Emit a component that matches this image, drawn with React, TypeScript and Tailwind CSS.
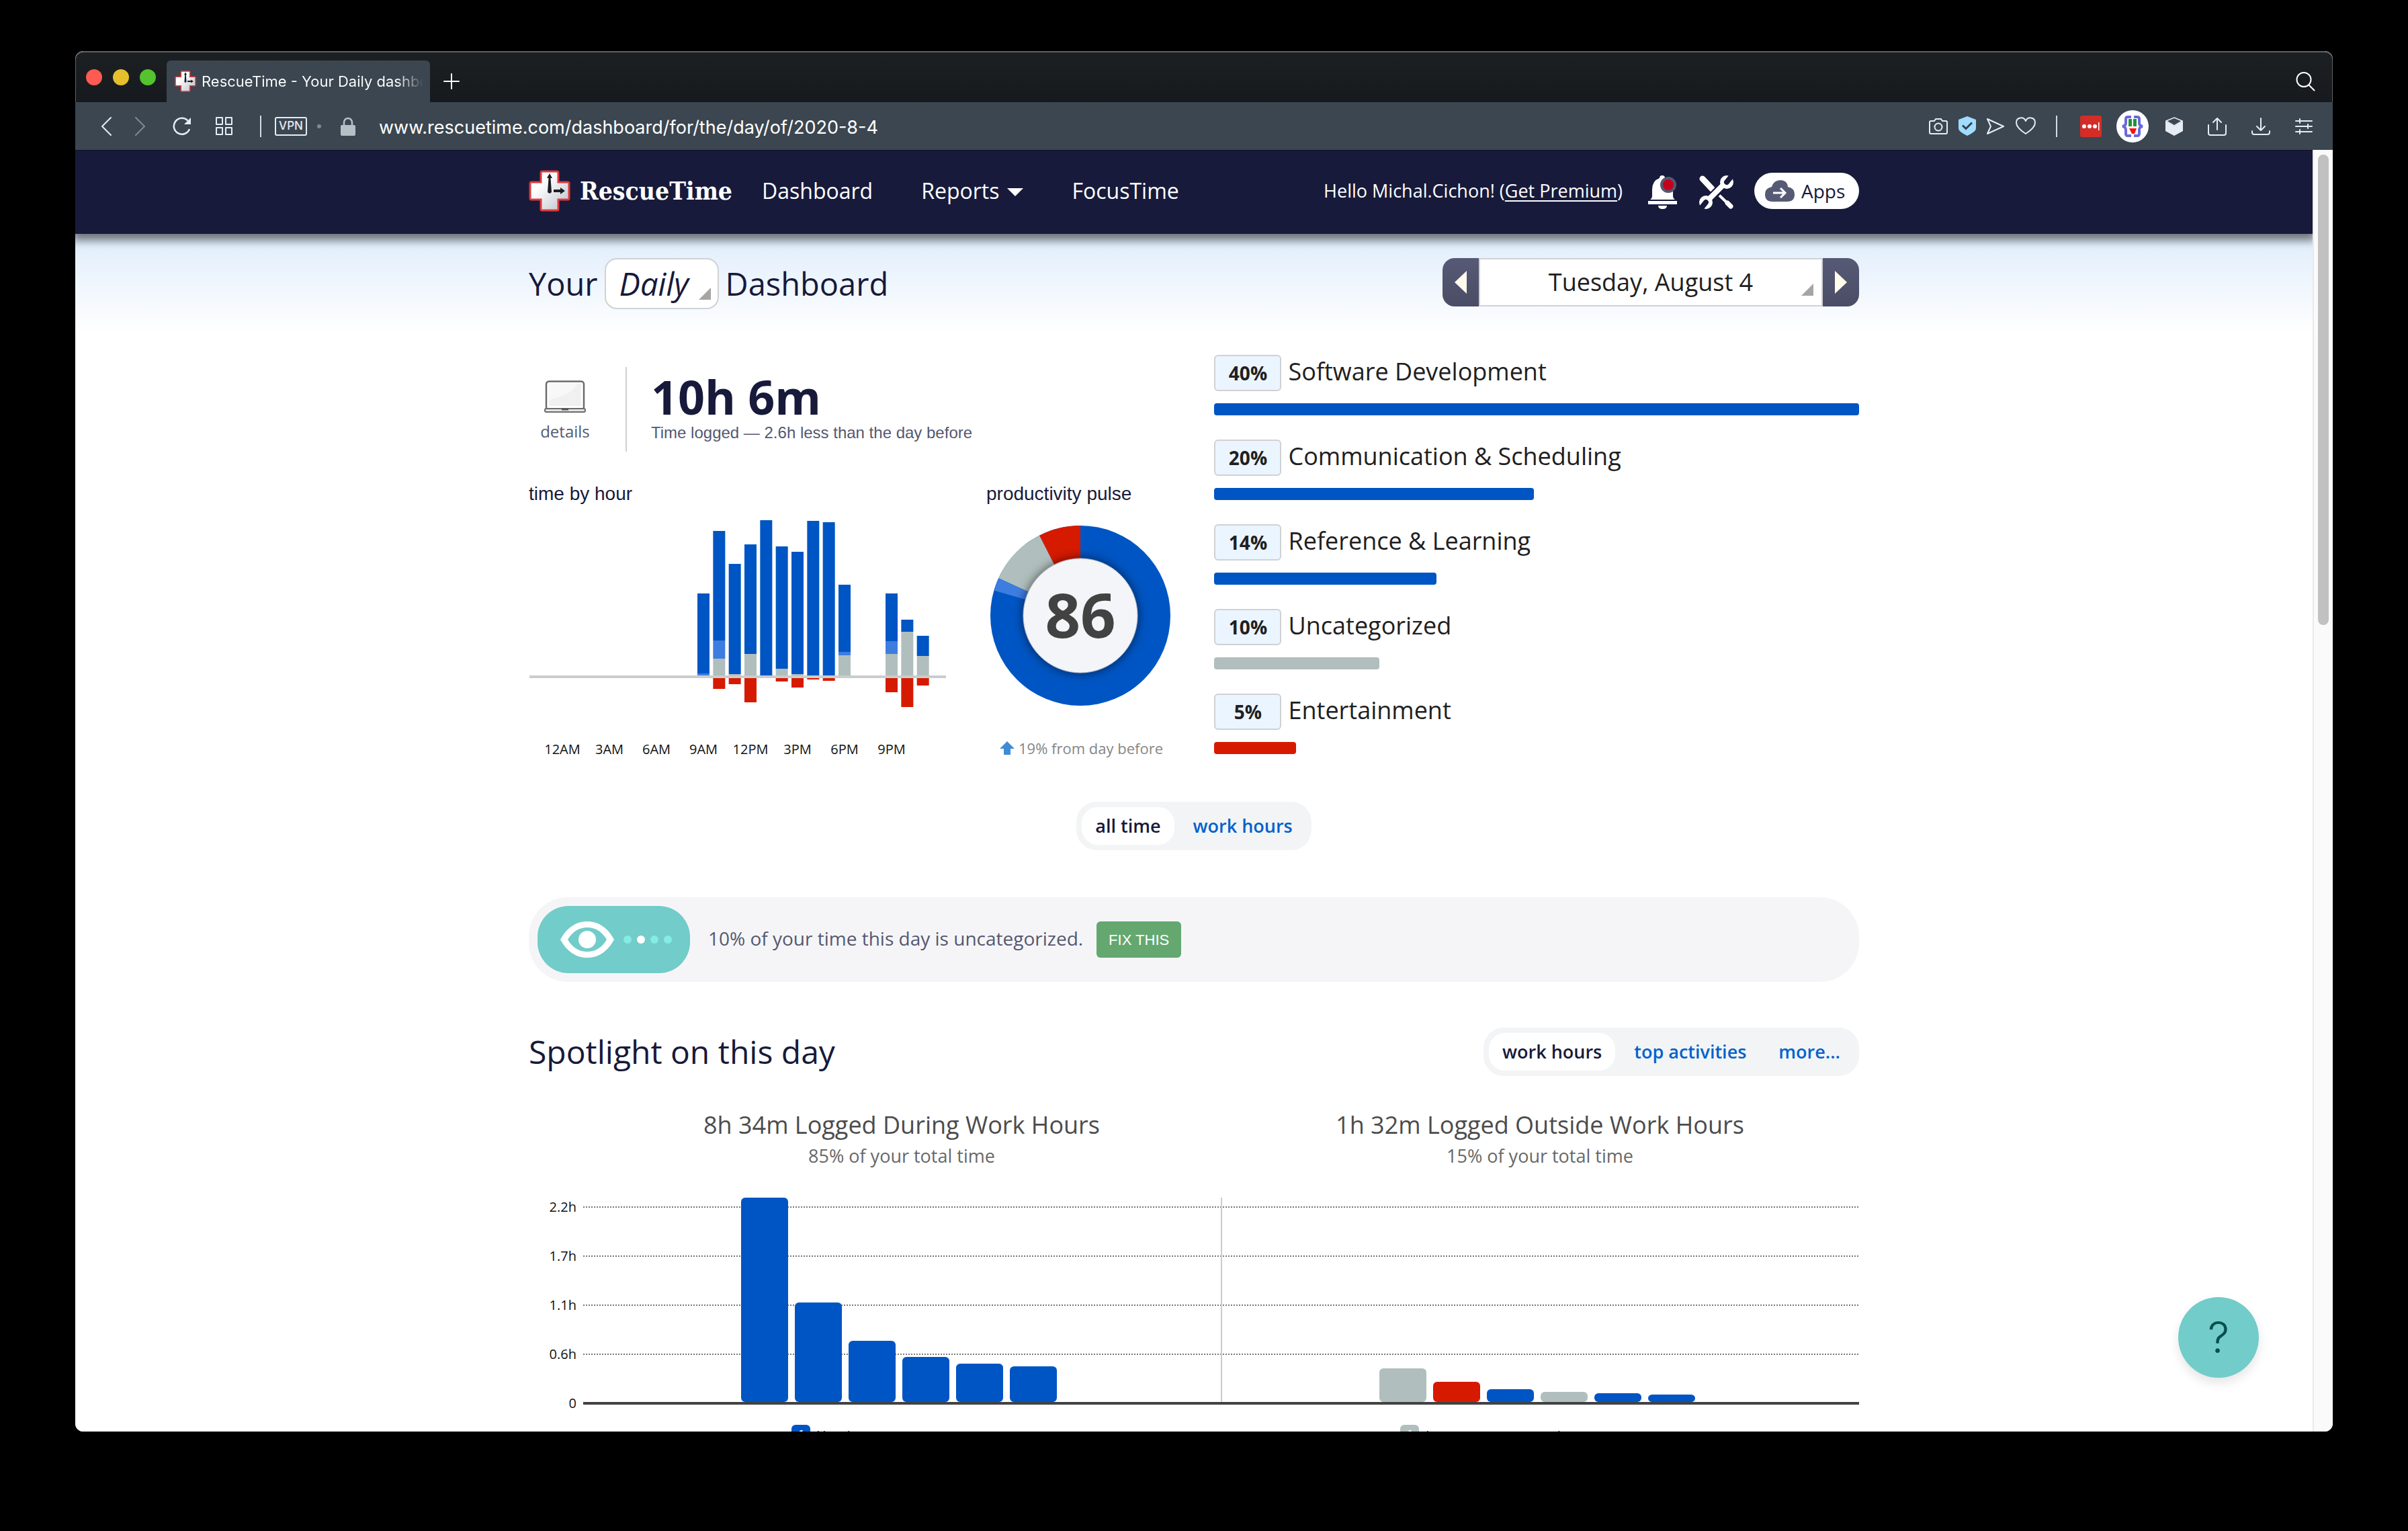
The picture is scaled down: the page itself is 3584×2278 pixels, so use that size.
import type { ReactNode } from "react";

const BLUE = "#0055c4";
const LIGHT = "#3d7ddf";
const GRAY = "#b0bfbd";
const RED = "#d61a00";

const HOUR_BASE = 236;
// hour, then the tops of the blue, light blue and gray parts, and the red bottom
const hours: [number, number, number, number, number][] = [
  [9, 114, 233, 236, 236],
  [10, 21, 184, 211, 256],
  [11, 70, 234, 234, 249],
  [12, 41, 204, 204, 276],
  [13, 5, 236, 236, 236],
  [14, 44, 226, 226, 245],
  [15, 52, 234, 234, 254],
  [16, 6, 236, 236, 242],
  [17, 8, 236, 236, 244],
  [18, 101, 201, 206, 236],
  [21, 114, 185, 204, 261],
  [22, 153, 171, 171, 283],
  [23, 177, 207, 207, 251],
];
const hourLabels = ["12AM", "3AM", "6AM", "9AM", "12PM", "3PM", "6PM", "9PM"];

const categories = [
  { pct: "40%", name: "Software Development", width: 100, color: BLUE },
  { pct: "20%", name: "Communication & Scheduling", width: 49.6, color: BLUE },
  { pct: "14%", name: "Reference & Learning", width: 34.4, color: BLUE },
  { pct: "10%", name: "Uncategorized", width: 25.6, color: GRAY },
  { pct: "5%", name: "Entertainment", width: 12.7, color: RED },
];

const ticks: [string, number][] = [["2.2h", 14], ["1.7h", 87], ["1.1h", 160], ["0.6h", 233], ["0", 306]];
const insideBars = [304, 148, 91, 67, 57, 53];
const outsideBars: [number, string][] = [[50, GRAY], [30, RED], [19, BLUE], [15, GRAY], [13, BLUE], [11, BLUE]];

function Cross({ className }: { className: string }) {
  return (
    <svg viewBox="0 0 62 62" className={className} aria-hidden="true">
      <defs>
        <linearGradient id="cross" x1="0" y1="0" x2="1" y2="1">
          <stop offset="0.3" stopColor="#fff" />
          <stop offset="1" stopColor="#b9bfc8" />
        </linearGradient>
      </defs>
      <path d="M20 2h22q2 0 2 2v14h14q2 0 2 2v22q0 2-2 2H44v14q0 2-2 2H20q-2 0-2-2V44H4q-2 0-2-2V20q0-2 2-2h14V4q0-2 2-2Z" fill="url(#cross)" stroke="#e0393a" strokeWidth="3" />
      <path d="M31 5l4 7h-2.500l1.500 21-3 2-3-2 1.500-21H27Z" fill="#1b1d22" />
      <path d="M37 29h10v-3l7 5-7 5v-3H37Z" fill="#1b1d22" />
    </svg>
  );
}

function IconButton({ label, children }: { label: string; children: ReactNode }) {
  return (
    <button type="button" aria-label={label} className="flex shrink-0 items-center justify-center">
      {children}
    </button>
  );
}

function Line({ d, w, h, className = "", width = 2 }: { d: string; w: number; h: number; className?: string; width?: number }) {
  return (
    <svg width={w} height={h} viewBox={`0 0 ${w} ${h}`} className={className} fill="none" stroke="currentColor" strokeWidth={width} strokeLinecap="round" strokeLinejoin="round" aria-hidden="true">
      <path d={d} />
    </svg>
  );
}

function TabBar() {
  return (
    <div className="flex h-[76px] items-end rounded-t-[12px] border-x border-t-2 border-[#5d6163] bg-linear-to-b from-[#1c2022] to-[#161a1e]">
      <div className="flex h-full w-[135px] items-center gap-4 pl-[15px]">
        <button type="button" aria-label="Close window" className="size-6 rounded-full bg-[#ff5b53]" />
        <button type="button" aria-label="Minimize window" className="size-6 rounded-full bg-[#e6bf2c]" />
        <button type="button" aria-label="Zoom window" className="size-6 rounded-full bg-[#55c32e]" />
      </div>
      <div className="flex h-[62px] w-[392px] items-center gap-2 rounded-t-[6px] bg-[#3b4650] pl-3 text-white">
        <Cross className="size-[32px] shrink-0" />
        <span className="w-[330px] overflow-hidden bg-linear-to-r from-white from-88% to-transparent bg-clip-text text-[22px] leading-8 whitespace-nowrap text-transparent">
          RescueTime - Your Daily dashboard
        </span>
      </div>
      <div className="flex h-[62px] flex-1 items-center justify-between pr-[24px] pl-5 text-white">
        <IconButton label="New tab">
          <Line w={24} h={24} d="M12 1v22M1 12h22" />
        </IconButton>
        <IconButton label="Search tabs">
          <Line w={30} h={30} d="M12 2a10.500 10.500 0 1 1 0 21a10.500 10.500 0 1 1 0-21M19.500 20.500l8 8" />
        </IconButton>
      </div>
    </div>
  );
}

function AddressBar() {
  return (
    <div className="flex h-[71px] items-center bg-[#3b4650] pr-[30px] pl-[38px] text-[#e6ecf4]">
      <IconButton label="Back"><Line w={17} h={28} d="M15 1L2 14l13 13" /></IconButton>
      <div className="ml-[33px] flex text-[#7f8993]"><IconButton label="Forward"><Line w={17} h={28} d="M2 1l13 13L2 27" /></IconButton></div>
      <div className="ml-[40px] flex">
        <IconButton label="Reload">
          <svg width="28" height="28" viewBox="0 0 28 28" fill="none" aria-hidden="true">
            <path d="M25 18A12 12 0 1 1 22.500 5.500" stroke="currentColor" strokeWidth="2.500" />
            <path d="M27 1v10H17Z" fill="currentColor" />
          </svg>
        </IconButton>
      </div>
      <div className="ml-[35px] flex">
        <IconButton label="Speed dial">
          <Line w={27} h={27} d="M2 1h9v10H2ZM16 1h9v10h-9ZM2 16h9v10H2ZM16 16h9v10h-9Z" />
        </IconButton>
      </div>
      <div className="ml-[40px] h-8 w-0.5 bg-[#d5dbe2]" />
      <button type="button" className="ml-[20px] flex h-7 w-12 items-center justify-center rounded-[3px] border-2 border-current text-[17px] leading-none font-medium">VPN</button>
      <div className="ml-[15px] size-1.5 rounded-full bg-[#7f8993]" />
      <svg width="22" height="28" viewBox="0 0 22 28" className="ml-[29px] shrink-0 text-[#b6bec6]" aria-hidden="true">
        <path d="M5 13V8a6 6 0 0 1 12 0v5" fill="none" stroke="currentColor" strokeWidth="2.500" />
        <rect y="12" width="22" height="16" rx="2" fill="currentColor" />
      </svg>
      <input aria-label="Address" defaultValue="www.rescuetime.com/dashboard/for/the/day/of/2020-8-4" className="ml-[35px] min-w-0 flex-1 bg-transparent pt-1 text-[27px] leading-9 text-white outline-none" />
      <div className="flex items-center gap-4">
        <IconButton label="Snapshot">
          <Line w={28} h={26} d="M3 5h5l2-3h8l2 3h5q2 0 2 2v15q0 2-2 2H3q-2 0-2-2V7q0-2 2-2ZM14 8.500a5.500 5.500 0 1 1 0 11a5.500 5.500 0 1 1 0-11" />
        </IconButton>
        <IconButton label="Ad blocker">
          <svg width="26" height="29" viewBox="0 0 26 29" aria-hidden="true">
            <path d="M13 0l13 5v13q0 5-13 11Q0 23 0 18V5Z" fill="#9fdcff" />
            <path d="M6 13.500l5 5 9-9" fill="none" stroke="#34414c" strokeWidth="3" />
          </svg>
        </IconButton>
        <IconButton label="Send"><Line w={27} h={26} d="M1 2l24 11L1 24l5-11Z" /></IconButton>
        <IconButton label="Bookmark"><Line w={30} h={27} d="M15 25Q1 16 1 8.500C1 0 12-1 15 6c3-7 14-6 14 2.500Q29 16 15 25Z" /></IconButton>
      </div>
      <div className="ml-[30px] h-8 w-0.5 bg-[#d5dbe2]" />
      <div className="ml-[34px] flex">
        <IconButton label="Password manager">
          <svg width="32" height="32" viewBox="0 0 32 32" aria-hidden="true">
            <rect width="32" height="32" rx="3" fill="#d42d27" />
            <g fill="#fff"><circle cx="6" cy="16" r="3" /><circle cx="14" cy="16" r="3" /><circle cx="22" cy="16" r="3" /><rect x="27" y="10" width="1.500" height="12" /></g>
          </svg>
        </IconButton>
      </div>
      <div className="ml-[22px] flex">
        <IconButton label="JSON viewer">
          <svg width="48" height="48" viewBox="0 0 48 48" aria-hidden="true">
            <circle cx="24" cy="24" r="24" fill="#fff" />
            <path d="M22 10h-5q-3 0-3 3v6q0 4-5 5q5 1 5 5v6q0 3 3 3h5M26 10h5q3 0 3 3v6q0 4 5 5q-5 1-5 5v6q0 3-3 3h-5" fill="none" stroke="#6a68dc" strokeWidth="4" />
            <path d="M18 13h5v11h-5ZM25 13h5v11h-5Z" fill="#1f9339" />
            <path d="M19 27h11l-3 8h-4Z" fill="#fb1010" />
          </svg>
        </IconButton>
      </div>
      <div className="ml-[25px] flex">
        <IconButton label="Extensions">
          <svg width="26" height="28" viewBox="0 0 26 28" fill="currentColor" aria-hidden="true">
            <path d="M13 1l12 5-12 7L1 6Z" fill="none" stroke="currentColor" strokeWidth="1.500" />
            <path d="M0 6l13 7.500L26 6v15l-13 7-13-7Z" />
          </svg>
        </IconButton>
      </div>
      <div className="ml-[37px] flex items-center gap-[37px]">
        <IconButton label="Share"><Line w={28} h={28} d="M1 12v12q0 3 3 3h20q3 0 3-3V12M14 19V2M8 8l6-6 6 6" /></IconButton>
        <IconButton label="Downloads"><Line w={28} h={26} d="M1 20v2q0 3 3 3h20q3 0 3-3v-2M14 1v18M8 13l6 6 6-6" /></IconButton>
        <IconButton label="Easy setup"><Line w={26} h={24} d="M1 4h24M1 12h24M1 20h24M7 1v6M19 9v6M7 17v6" /></IconButton>
      </div>
    </div>
  );
}

function SiteNav() {
  return (
    <header className="relative z-10 h-[125px] border-t border-[#0d1226] bg-[#171a3a] pb-1 text-white shadow-[0_6px_12px_4px_rgba(0,0,0,0.5)]">
      <div className="mx-auto flex h-full max-w-[1980px] items-center">
        <a href="#home" className="flex items-center gap-3.5">
          <Cross className="size-[62px]" />
          <span className="font-['DejaVu_Serif_Condensed','DejaVu_Serif',serif] text-[37px] leading-[48px] font-bold">RescueTime</span>
        </a>
        <nav className="ml-[44px] flex items-center gap-[72px] text-[32px] leading-[48px]">
          <a href="#dashboard">Dashboard</a>
          <a href="#reports" className="flex items-center gap-3">
            Reports
            <svg width="24" height="12" viewBox="0 0 24 12" className="mt-1" aria-hidden="true"><path d="M0 0h24L12 12Z" fill="currentColor" /></svg>
          </a>
          <a href="#focustime">FocusTime</a>
        </nav>
        <div className="ml-auto flex items-center">
          <p className="text-[27px] leading-9">
            Hello Michal.Cichon! (<a href="#premium" className="underline underline-offset-4">Get Premium</a>)
          </p>
          <div className="ml-[38px] flex pt-1">
            <IconButton label="Notifications">
              <svg width="43" height="50" viewBox="0 0 43 50" aria-hidden="true">
                <path d="M21 0q4 0 4 4q12 4 12 17v10q0 3 3 5H3q3-2 3-5V21Q6 8 17 4q0-4 4-4Z" fill="#fff" />
                <path d="M0 38h43v5H0ZM15 45h13q0 5-6.500 5T15 45Z" fill="#fff" />
                <circle cx="30" cy="14" r="10" fill="#c4001d" stroke="#55586f" strokeWidth="4" />
              </svg>
            </IconButton>
          </div>
          <div className="ml-[33px] flex pt-1">
            <IconButton label="Settings">
              <svg width="51" height="50" viewBox="0 0 51 50" aria-hidden="true">
                <g stroke="#fff" fill="none" strokeLinecap="round">
                  <path d="M5 5l15 16" strokeWidth="9" />
                  <path d="M22 22l24 23" strokeWidth="4" />
                  <path d="M42 41l5 5" strokeWidth="7" />
                </g>
                <g stroke="#171a3a" strokeWidth="13"><path d="M15 36l22-23" /></g>
                <path d="M11 39L40 10" stroke="#fff" strokeWidth="8" />
                <circle cx="41" cy="10" r="10" fill="#fff" />
                <circle cx="10" cy="40" r="10" fill="#fff" />
                <path d="M41 10l9-11M10 40l-9 11" stroke="#171a3a" strokeWidth="8" strokeLinecap="round" />
              </svg>
            </IconButton>
          </div>
          <button type="button" className="ml-[31px] flex h-[54px] w-[156px] items-center gap-2.5 rounded-full bg-white pl-4 text-[28px] leading-9 text-[#171a3a]">
            <svg width="44" height="32" viewBox="0 0 44 32" aria-hidden="true">
              <path d="M11 32Q0 32 0 21 0 12 10 10 13 0 23 0 33 0 34 10 44 12 44 21 44 32 33 32Z" fill="#575a75" />
              <path d="M12 19h17M23 12l7 7-7 7" fill="none" stroke="#fff" strokeWidth="3" />
            </svg>
            Apps
          </button>
        </div>
      </div>
    </header>
  );
}

function Corner() {
  return (
    <svg width="18" height="18" viewBox="0 0 18 18" className="pointer-events-none absolute right-3 bottom-3.5" aria-hidden="true">
      <path d="M18 0v18H0Z" fill="#a5a5a5" />
    </svg>
  );
}

function PageHeader() {
  return (
    <div className="flex items-start justify-between">
      <h1 className="flex h-[76px] items-center gap-2.5 text-[47px] leading-[64px] text-[#171a3a]">
        <span>Your</span>
        <span className="relative block">
          <select aria-label="Period" className="h-[76px] w-[170px] appearance-none rounded-[18px] border-2 border-[#cfd2d5] bg-white pl-5 italic">
            <option>Daily</option>
            <option>Weekly</option>
          </select>
          <Corner />
        </span>
        <span>Dashboard</span>
      </h1>
      <div className="flex h-[72px] text-[36px] leading-[48px] text-[#202020]">
        <button type="button" aria-label="Previous day" className="flex w-[54px] items-center justify-center rounded-l-[18px] bg-linear-to-b from-[#575a75] to-[#4b4d66]">
          <svg width="18" height="34" viewBox="0 0 18 34" aria-hidden="true"><path d="M18 0v34L0 17Z" fill="#fffcee" /></svg>
        </button>
        <button type="button" className="relative w-[512px] border-2 border-[#cfd2d5] bg-white">
          Tuesday, August 4
          <Corner />
        </button>
        <button type="button" aria-label="Next day" className="flex w-[54px] items-center justify-center rounded-r-[18px] bg-linear-to-b from-[#575a75] to-[#4b4d66]">
          <svg width="18" height="34" viewBox="0 0 18 34" aria-hidden="true"><path d="M0 0v34l18-17Z" fill="#fffcee" /></svg>
        </button>
      </div>
    </div>
  );
}

function Logged() {
  return (
    <div className="flex h-[126px] items-stretch">
      <a href="#details" className="flex w-[146px] flex-col items-center border-r-2 border-[#cfcfcf] pt-5 pr-9 text-[24px] leading-8 text-[#55586f]">
        <svg width="62" height="48" viewBox="0 0 62 48" aria-hidden="true">
          <rect x="3" y="1.500" width="56" height="42" rx="4" fill="#fff" stroke="#6b6b6b" strokeWidth="2.500" />
          <rect x="7" y="5" width="48" height="33" fill="#f0f0f1" />
          <path d="M7 29Q40 22 50 5H7Z" fill="#f8f8f8" />
          <rect x="1" y="42" width="60" height="5" rx="2" fill="#e4e4e4" stroke="#6b6b6b" strokeWidth="2" />
          <path d="M26 43h10" stroke="#555" strokeWidth="3" />
        </svg>
        <span className="mt-3">details</span>
      </a>
      <div className="flex flex-col pt-1.5 pl-[36px]">
        <p className="text-[70px] leading-[76px] font-bold text-[#171a3a]">10h 6m</p>
        <p className="font-['Liberation_Sans',Arial,sans-serif] text-[24px] leading-8 text-[#55586f]">Time logged — 2.6h less than the day before</p>
      </div>
    </div>
  );
}

function HourChart() {
  return (
    <svg viewBox="0 0 681 360" className="mt-4 w-full" role="img" aria-label="Time by hour">
      {hours.map(([h, top, light, gray, red]) => {
        const x = 41 + (h * 70) / 3;
        return (
          <g key={h}>
            <rect x={x} y={top} width="18" height={light - top} fill={BLUE} />
            <rect x={x} y={light} width="18" height={gray - light} fill={LIGHT} />
            <rect x={x} y={gray} width="18" height={HOUR_BASE - gray} fill={GRAY} />
            <rect x={x} y={HOUR_BASE} width="18" height={red - HOUR_BASE} fill={RED} />
          </g>
        );
      })}
      <rect x="1" y={HOUR_BASE} width="620" height="4" fill="#cbcdcc" />
      {hourLabels.map((t, i) => (
        <text key={t} x={50 + i * 70} y="353" textAnchor="middle" fontSize="20" fill="#111">{t}</text>
      ))}
    </svg>
  );
}

function Pulse() {
  return (
    <svg viewBox="-136 -147 272 284" width="272" height="284" className="mt-4 ml-1" role="img" aria-label="Productivity pulse 86">
      <defs>
        <filter id="disc" x="-30%" y="-30%" width="160%" height="160%">
          <feDropShadow dx="0" dy="0" stdDeviation="8" floodColor="#000" floodOpacity="0.6" />
        </filter>
      </defs>
      <circle r="134" fill={BLUE} />
      <path d="M0 0V-134A134 134 0 0 0-61-119.300Z" fill={RED} />
      <path d="M0 0L-61-119.300A134 134 0 0 0-121.800-55.800Z" fill={GRAY} />
      <path d="M0 0L-121.800-55.800A134 134 0 0 0-128.600-37.600Z" fill={LIGHT} />
      <circle r="85" fill="#f4f5f8" stroke="#b9bcc6" strokeWidth="1" filter="url(#disc)" />
      <text x="0" y="33" textAnchor="middle" fontSize="92" fontWeight="700" fill="#424242">86</text>
    </svg>
  );
}

function Summary() {
  return (
    <section className="mt-[68px] grid grid-cols-[1021fr_960fr]">
      <div className="pt-[18px]">
        <Logged />
        <div className="mt-[45px] flex">
          <div className="w-[681px]">
            <h2 className="font-['Liberation_Sans',Arial,sans-serif] text-[28px] leading-9 text-[#171a3a]">time by hour</h2>
            <HourChart />
          </div>
          <div>
            <h2 className="font-['Liberation_Sans',Arial,sans-serif] text-[28px] leading-9 text-[#171a3a]">productivity pulse</h2>
            <Pulse />
            <p className="mt-[44px] flex items-center gap-1.5 pl-5 text-[22px] leading-8 text-[#868686]">
              <svg width="22" height="20" viewBox="0 0 22 20" aria-hidden="true"><path d="M11 0l11 11h-6v9H6v-9H0Z" fill="#3f8bd4" /></svg>
              19% from day before
            </p>
          </div>
        </div>
      </div>
      <ul className="flex flex-col gap-9">
        {categories.map((c) => (
          <li key={c.name}>
            <a href="#category" className="flex items-baseline gap-2.5 text-[#202020]">
              <span className="block h-[54px] w-[100px] rounded-[6px] border-2 border-[#cfd2d5] bg-[#ebf5ff] text-center text-[28px] leading-[50px] font-bold">{c.pct}</span>
              <span className="text-[36px] leading-none">{c.name}</span>
            </a>
            <div className="mt-[18px] h-[18px] rounded-[4px]" style={{ width: `${c.width}%`, backgroundColor: c.color }} />
          </li>
        ))}
      </ul>
    </section>
  );
}

function Tabs({ items }: { items: string[] }) {
  return (
    <div className="flex h-[72px] items-center rounded-[30px] bg-[#f3f4f6] p-2 text-[27px] leading-9 font-semibold text-[#0062cc]">
      {items.map((t, i) => (
        <button key={t} type="button" className={i === 0 ? "h-14 rounded-[24px] bg-white px-5 text-[#171a3a]" : "h-14 pr-5 pl-7"}>
          {t}
        </button>
      ))}
    </div>
  );
}

function Banner() {
  return (
    <section className="mt-[70px] flex h-[126px] items-center rounded-[58px] bg-[#f5f5f8] pl-[13px]">
      <div className="flex h-[100px] w-[227px] items-center rounded-[46px] bg-[#72ccc9] pl-[34px]">
        <svg width="80" height="54" viewBox="0 0 80 54" aria-hidden="true">
          <path d="M0 27C9 10 23 0 40 0s31 10 40 27c-9 17-23 27-40 27S9 44 0 27Z" fill="#fff" />
          <path d="M11 27C18 15 28 9 40 9s22 6 29 18c-7 12-17 18-29 18S18 39 11 27Z" fill="#72ccc9" />
          <circle cx="40" cy="27" r="13" fill="#fff" />
        </svg>
        <div className="ml-3.5 flex gap-2">
          <span className="size-3 rounded-full bg-[#85ece3]" />
          <span className="size-3 rounded-full bg-white" />
          <span className="size-3 rounded-full bg-[#85ece3]" />
          <span className="size-3 rounded-full bg-[#85ece3]" />
        </div>
      </div>
      <p className="ml-[27px] pb-1 text-[28px] leading-9 text-[#55586f]">10% of your time this day is uncategorized.</p>
      <button type="button" className="ml-5 h-[54px] w-[126px] rounded-[6px] bg-[#64a870] font-['Liberation_Sans',Arial,sans-serif] text-[22px] text-white">FIX THIS</button>
    </section>
  );
}

function WorkChart() {
  return (
    <svg viewBox="0 0 1980 330" className="mt-[44px] w-full" role="img" aria-label="Time logged during and outside work hours">
      {ticks.map(([label, y]) => (
        <g key={label}>
          <text x="71" y={y + 7} textAnchor="end" fontSize="20" fill="#111">{label}</text>
          {label !== "0" && <line x1="81" x2="1980" y1={y} y2={y} stroke="#777" strokeWidth="2" strokeDasharray="2 2" />}
        </g>
      ))}
      <line x1="1031" x2="1031" y1="0" y2="305" stroke="#ccc" strokeWidth="2" />
      {insideBars.map((h, i) => (
        <rect key={i} x={316 + i * 80} y={304 - h} width="70" height={h} rx="6" fill={BLUE} />
      ))}
      {outsideBars.map(([h, c], i) => (
        <rect key={i} x={1266 + i * 80} y={304 - h} width="70" height={h} rx="6" fill={c} />
      ))}
      <rect x="81" y="304" width="1899" height="4" fill="#424242" />
    </svg>
  );
}

function Legend({ color, name }: { color: string; name: string }) {
  return (
    <div className="flex items-start gap-2.5 text-[22px] leading-8 text-[#333]">
      <span className="flex size-7 items-center justify-center rounded-[6px] text-[18px] font-bold text-white" style={{ backgroundColor: color }}>1</span>
      <span>{name}</span>
    </div>
  );
}

function Spotlight() {
  return (
    <section className="mt-[68px]">
      <div className="flex items-center justify-between">
        <h2 className="text-[48px] leading-[64px] text-[#171a3a]">Spotlight on this day</h2>
        <Tabs items={["work hours", "top activities", "more..."]} />
      </div>
      <div className="mt-[49px] grid grid-cols-2 pl-20 text-center">
        <div>
          <h3 className="text-[36px] leading-[48px] text-[#4c4c4c]">8h 34m Logged During Work Hours</h3>
          <p className="mt-1 text-[27px] leading-9 text-[#686868]">85% of your total time</p>
        </div>
        <div>
          <h3 className="text-[36px] leading-[48px] text-[#4c4c4c]">1h 32m Logged Outside Work Hours</h3>
          <p className="mt-1 text-[27px] leading-9 text-[#686868]">15% of your total time</p>
        </div>
      </div>
      <WorkChart />
      <div className="mt-2 grid grid-cols-2 pl-20">
        <div className="pl-[311px]"><Legend color={BLUE} name="Xcode" /></div>
        <div className="pl-[267px]"><Legend color={GRAY} name="lawn-areas.stream.ly" /></div>
      </div>
    </section>
  );
}

export default function App() {
  return (
    <div className="flex h-screen flex-col bg-black px-28 pt-[76px] pb-[148px] font-['Open_Sans','Noto_Sans',sans-serif]">
      <div className="flex min-h-0 flex-1 flex-col overflow-hidden rounded-[12px] bg-white">
        <div className="shrink-0 font-['Inter',sans-serif]">
          <TabBar />
          <AddressBar />
        </div>
        <div className="relative flex min-h-0 flex-1">
          <div className="min-w-0 flex-1 overflow-hidden">
            <SiteNav />
            <main className="bg-linear-to-b from-[#dfedfc] to-white to-[150px] pt-9">
              <div className="mx-auto max-w-[1980px]">
                <PageHeader />
                <Summary />
                <div className="mt-[64px] flex justify-center">
                  <Tabs items={["all time", "work hours"]} />
                </div>
                <Banner />
                <Spotlight />
              </div>
            </main>
          </div>
          <div className="w-[30px] shrink-0 border-l-2 border-[#e9e9e9] bg-[#fafafa] pt-[7px] pl-1.5">
            <div className="h-[700px] w-4 rounded-full bg-[#c1c1c1]" />
          </div>
          <button type="button" aria-label="Help" className="absolute right-[110px] bottom-20 flex size-[120px] items-center justify-center rounded-full bg-[#72ccc9] font-['Inter',sans-serif] text-[64px] leading-none font-light text-[#04504c] shadow-[0_8px_16px_rgba(0,0,0,0.1)]">
            ?
          </button>
        </div>
      </div>
    </div>
  );
}
